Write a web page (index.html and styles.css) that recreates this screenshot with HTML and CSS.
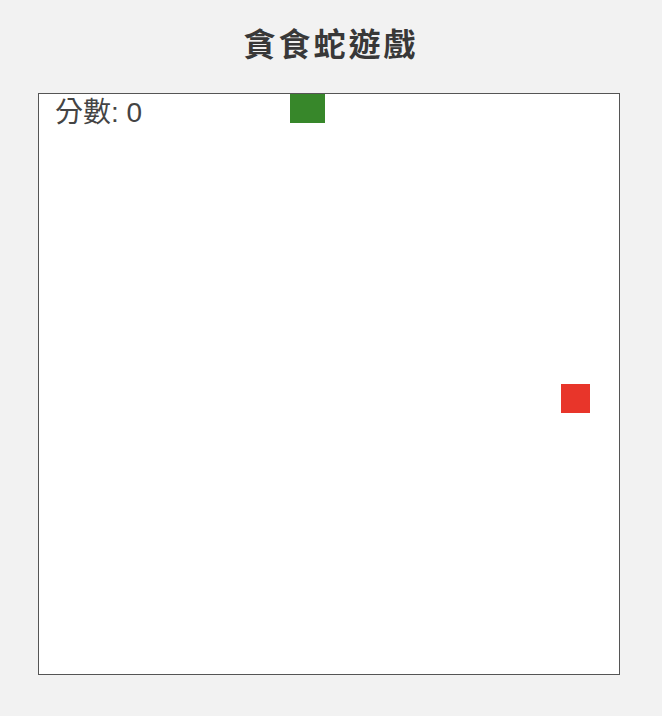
FILE: index.html
```html
<!DOCTYPE html>
<html lang="zh-Hant">
<head>
<meta charset="utf-8">
<title>貪食蛇遊戲</title>
<link rel="stylesheet" href="styles.css">
</head>
<body>
<main class="page">
  <h1 class="title">貪食蛇遊戲</h1>
  <div class="board">
    <div class="score">分數: 0</div>
    <div class="cell snake" style="left:251px;top:-1px;width:35px;height:30px"></div>
    <div class="cell food" style="left:522px;top:290px;width:29px;height:29px"></div>
  </div>
</main>
</body>
</html>
```
FILE: styles.css
```css
html, body {
  margin: 0;
  padding: 0;
  background: #f2f2f2;
}
.page {
  width: 662px;
  height: 716px;
  display: flex;
  flex-direction: column;
  align-items: center;
  font-family: "Noto Sans CJK TC", "Noto Sans", sans-serif;
}
.title {
  margin: 20px 0 0 0;
  height: 73px;
  font-size: 32px;
  line-height: 44px;
  font-weight: 700;
  color: #383838;
  letter-spacing: 3px;
}
.board {
  position: relative;
  width: 580px;
  height: 580px;
  margin-left: -4px;
  background: #fff;
  border: 1px solid #555;
  overflow: hidden;
}
.score {
  position: absolute;
  left: 16px;
  top: 3px;
  font-size: 28px;
  line-height: 32px;
  color: #444;
  font-family: "Liberation Sans", "Noto Sans CJK TC", sans-serif;
}
.cell {
  position: absolute;
}
.snake { background: #37872a; }
.food { background: #e8352a; }
```
